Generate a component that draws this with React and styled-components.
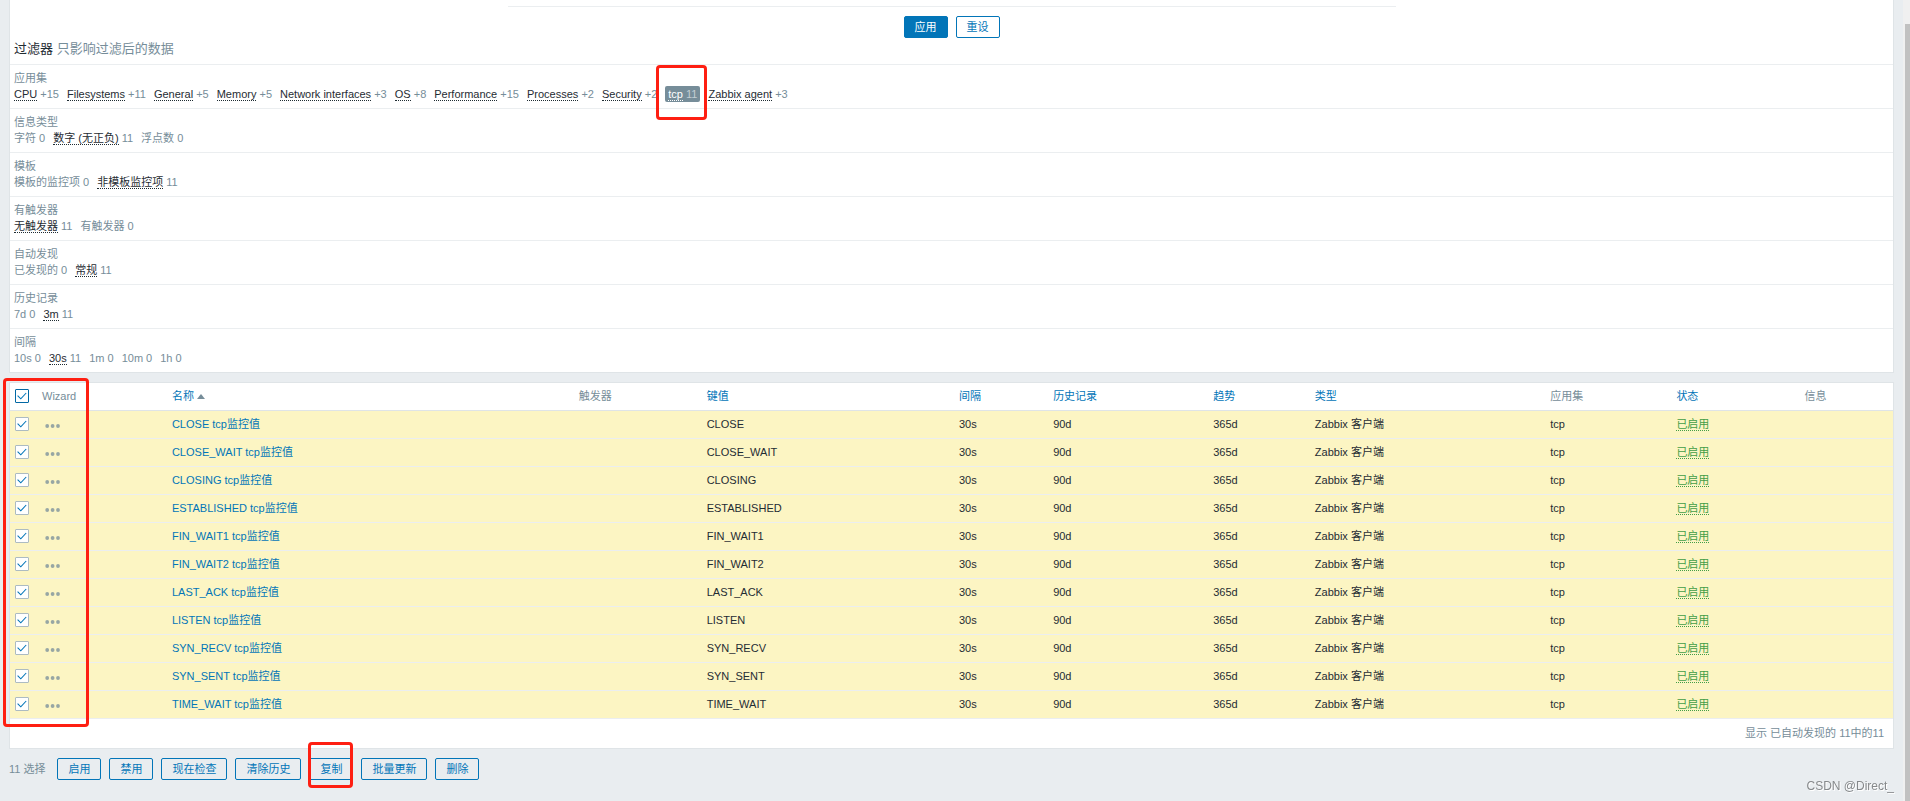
import { useState } from 'react';
import styled, { createGlobalStyle, css } from 'styled-components';

const subfilters = [
  {
    title: '应用集',
    items: [
      { name: 'CPU', count: '+15' },
      { name: 'Filesystems', count: '+11' },
      { name: 'General', count: '+5' },
      { name: 'Memory', count: '+5' },
      { name: 'Network interfaces', count: '+3' },
      { name: 'OS', count: '+8' },
      { name: 'Performance', count: '+15' },
      { name: 'Processes', count: '+2' },
      { name: 'Security', count: '+2' },
      { name: 'tcp', count: '11', active: true },
      { name: 'Zabbix agent', count: '+3' },
    ],
  },
  {
    title: '信息类型',
    items: [
      { name: '字符', count: '0' },
      { name: '数字 (无正负)', count: '11' },
      { name: '浮点数', count: '0' },
    ],
  },
  {
    title: '模板',
    items: [
      { name: '模板的监控项', count: '0' },
      { name: '非模板监控项', count: '11' },
    ],
  },
  {
    title: '有触发器',
    items: [
      { name: '无触发器', count: '11' },
      { name: '有触发器', count: '0' },
    ],
  },
  {
    title: '自动发现',
    items: [
      { name: '已发现的', count: '0' },
      { name: '常规', count: '11' },
    ],
  },
  {
    title: '历史记录',
    items: [
      { name: '7d', count: '0' },
      { name: '3m', count: '11' },
    ],
  },
  {
    title: '间隔',
    items: [
      { name: '10s', count: '0' },
      { name: '30s', count: '11' },
      { name: '1m', count: '0' },
      { name: '10m', count: '0' },
      { name: '1h', count: '0' },
    ],
  },
];

const columns = [
  { label: 'Wizard', width: '6.9%' },
  { label: '名称', width: '21.6%', sortable: true, sorted: true },
  { label: '触发器', width: '6.8%' },
  { label: '键值', width: '13.4%', sortable: true },
  { label: '间隔', width: '5%', sortable: true },
  { label: '历史记录', width: '8.5%', sortable: true },
  { label: '趋势', width: '5.4%', sortable: true },
  { label: '类型', width: '12.5%', sortable: true },
  { label: '应用集', width: '6.7%' },
  { label: '状态', width: '6.8%', sortable: true },
  { label: '信息' },
];

const keys = [
  'CLOSE',
  'CLOSE_WAIT',
  'CLOSING',
  'ESTABLISHED',
  'FIN_WAIT1',
  'FIN_WAIT2',
  'LAST_ACK',
  'LISTEN',
  'SYN_RECV',
  'SYN_SENT',
  'TIME_WAIT',
];

const actions = ['启用', '禁用', '现在检查', '清除历史', '复制', '批量更新', '删除'];

function Checkbox({ label, checked, onChange, strong }) {
  return (
    <CheckLabel>
      <CheckInput
        type="checkbox"
        aria-label={label}
        checked={checked}
        onChange={onChange}
        $strong={strong}
      />
      {checked && (
        <CheckMark viewBox="0 0 14 14" aria-hidden="true">
          <path d="M2.6 6.6 L5.8 9.8 L11.2 4" />
        </CheckMark>
      )}
    </CheckLabel>
  );
}

function SubfilterItem({ name, count, active }) {
  const link = (
    <>
      {count === '0' ? name : <SubfilterLink href="#">{name}</SubfilterLink>} <span>{count}</span>
    </>
  );

  if (active) {
    return (
      <ActiveItem>
        {link}
        <TagMark />
      </ActiveItem>
    );
  }
  return <Item>{link}</Item>;
}

function App() {
  const [selected, setSelected] = useState(keys);

  const toggle = (key) => {
    setSelected((current) =>
      current.includes(key) ? current.filter((k) => k !== key) : [...current, key]
    );
  };

  const toggleAll = () => {
    setSelected((current) => (current.length === keys.length ? [] : keys));
  };

  return (
    <>
      <GlobalStyle />
      <Page>
        <Main>
          <FilterPanel>
            <FilterForm />
            <FilterButtons>
              <Button type="button" $primary>
                应用
              </Button>
              <Button type="button">重设</Button>
            </FilterButtons>
            <FilterTitle>
              过滤器 <span>只影响过滤后的数据</span>
            </FilterTitle>
            {subfilters.map((group) => (
              <Subfilter key={group.title}>
                <SubfilterTitle>{group.title}</SubfilterTitle>
                <SubfilterItems>
                  {group.items.map((item) => (
                    <SubfilterItem key={item.name} {...item} />
                  ))}
                </SubfilterItems>
              </Subfilter>
            ))}
          </FilterPanel>

          <TablePanel>
            <Table>
              <colgroup>
                <Col $width="27px" />
                {columns.map((col) => (
                  <Col key={col.label} $width={col.width} />
                ))}
              </colgroup>
              <thead>
                <tr>
                  <Th>
                    <Checkbox
                      label="全选"
                      strong
                      checked={selected.length === keys.length}
                      onChange={toggleAll}
                    />
                  </Th>
                  {columns.map((col) => (
                    <Th key={col.label}>
                      {col.sortable ? <Link href="#">{col.label}</Link> : col.label}
                      {col.sorted && <SortArrow />}
                    </Th>
                  ))}
                </tr>
              </thead>
              <tbody>
                {keys.map((key) => (
                  <Row key={key} $selected={selected.includes(key)}>
                    <Td>
                      <Checkbox
                        label={key}
                        checked={selected.includes(key)}
                        onChange={() => toggle(key)}
                      />
                    </Td>
                    <Td>
                      <WizardButton type="button" aria-label="Wizard">
                        <svg width="16" height="4" viewBox="0 0 16 4">
                          <circle cx="2.2" cy="2" r="1.9" />
                          <circle cx="7.6" cy="2" r="1.9" />
                          <circle cx="13" cy="2" r="1.9" />
                        </svg>
                      </WizardButton>
                    </Td>
                    <Td>
                      <Link href="#">{key} tcp监控值</Link>
                    </Td>
                    <Td />
                    <Td>{key}</Td>
                    <Td>30s</Td>
                    <Td>90d</Td>
                    <Td>365d</Td>
                    <Td>Zabbix 客户端</Td>
                    <Td>tcp</Td>
                    <Td>
                      <StatusLink href="#">已启用</StatusLink>
                    </Td>
                    <Td />
                  </Row>
                ))}
              </tbody>
            </Table>
            <TableTotal>显示 已自动发现的 11中的11</TableTotal>
            <ColumnMark />
          </TablePanel>

          <ActionBar>
            <SelectedCount>{selected.length} 选择</SelectedCount>
            {actions.map((action) => (
              <Button key={action} type="button">
                {action}
                {action === '复制' && <ButtonMark />}
              </Button>
            ))}
          </ActionBar>
        </Main>
        <ScrollTrack>
          <ScrollThumb />
        </ScrollTrack>
        <Watermark>CSDN @Direct_</Watermark>
      </Page>
    </>
  );
}

export default App;

const GlobalStyle = createGlobalStyle`
  * {
    box-sizing: border-box;
  }

  body {
    margin: 0;
    background-color: #e9edf0;
    color: #1f2c33;
    font-family: "Liberation Sans", "Noto Sans CJK SC", sans-serif;
    font-size: 11px;
    line-height: 16px;
  }
`;

const Page = styled.div`
  display: flex;
  min-height: 100vh;
`;

const Main = styled.main`
  flex: 1;
  min-width: 0;
  padding: 0 9px;
`;

const FilterPanel = styled.section`
  background-color: #fff;
  border: 1px solid #dfe4e7;
  border-top: none;
`;

const FilterForm = styled.div`
  max-width: 888px;
  height: 7px;
  margin: 0 auto;
  border-bottom: 1px solid #ebeef0;
`;

const FilterButtons = styled.div`
  display: flex;
  justify-content: center;
  gap: 8px;
  padding-top: 9px;
`;

const Button = styled.button`
  position: relative;
  height: 22px;
  padding: 0 10px;
  border: 1px solid #0275b8;
  border-radius: 2px;
  background-color: transparent;
  color: #0275b8;
  font-family: inherit;
  font-size: 11px;
  line-height: 20px;
  cursor: pointer;
  ${({ $primary }) =>
    $primary &&
    css`
      background-color: #0275b8;
      color: #fff;
    `}
`;

const FilterTitle = styled.h4`
  margin: 0;
  padding: 0 4px 4px;
  font-size: 13px;
  font-weight: normal;
  line-height: 22px;

  span {
    color: #768d99;
  }
`;

const Subfilter = styled.div`
  padding: 5px 4px 6px;
  border-top: 1px solid #ebeef0;
  color: #768d99;
`;

const SubfilterTitle = styled.h3`
  margin: 0;
  font-size: 11px;
  font-weight: normal;
  line-height: 16px;
`;

const SubfilterItems = styled.div`
  display: flex;
  flex-wrap: wrap;
  gap: 0 8px;
`;

const Item = styled.span`
  white-space: nowrap;
`;

const SubfilterLink = styled.a`
  border-bottom: 1px dotted #1f2c33;
  color: #1f2c33;
  text-decoration: none;
`;

const ActiveItem = styled(Item)`
  position: relative;
  padding: 0 3px;
  border-radius: 2px;
  background-color: #768d99;
  color: #c3ced3;

  ${SubfilterLink} {
    border-color: #fff;
    color: #fff;
  }
`;

const TablePanel = styled.section`
  position: relative;
  margin-top: 9px;
  border: 1px solid #dfe4e7;
  background-color: #fff;
`;

const Table = styled.table`
  width: 100%;
  border-spacing: 0;
  table-layout: fixed;
`;

const Col = styled.col`
  width: ${({ $width }) => $width || 'auto'};
`;

const Th = styled.th`
  height: 28px;
  padding: 0 5px 1px;
  border-bottom: 1px solid #dfe4e7;
  color: #768d99;
  font-weight: normal;
  text-align: left;
  white-space: nowrap;
`;

const Td = styled.td`
  height: 28px;
  padding: 0 5px 1px;
  border-bottom: 1px solid #ebeef0;
  white-space: nowrap;
`;

const Row = styled.tr`
  background-color: ${({ $selected }) => ($selected ? '#fcf5c3' : '#fff')};
`;

const Link = styled.a`
  color: #0275b8;
  text-decoration: none;
  &:hover {
    text-decoration: underline;
  }
`;

const StatusLink = styled.a`
  border-bottom: 1px dotted #429e47;
  color: #429e47;
  text-decoration: none;
`;

const SortArrow = styled.span`
  display: inline-block;
  margin-left: 3px;
  border: 4px solid transparent;
  border-top: none;
  border-bottom: 5px solid #768d99;
  vertical-align: 1px;
`;

const CheckLabel = styled.label`
  display: grid;
  width: 14px;
  height: 14px;
`;

const CheckInput = styled.input`
  grid-area: 1 / 1;
  width: 14px;
  height: 14px;
  margin: 0;
  border: 1px solid ${({ $strong }) => ($strong ? '#0268a4' : '#acbbc2')};
  border-radius: 1px;
  background-color: #fff;
  appearance: none;
`;

const CheckMark = styled.svg`
  grid-area: 1 / 1;
  width: 14px;
  height: 14px;
  fill: none;
  stroke: #0275b8;
  stroke-width: 1.1;
  pointer-events: none;
`;

const WizardButton = styled.button`
  display: block;
  padding: 3px 3px 0;
  border: none;
  background: none;
  fill: #97a6a4;
  line-height: 0;
  cursor: pointer;
`;

const TableTotal = styled.div`
  padding: 6px 9px 7px;
  color: #768d99;
  text-align: right;
`;

const ActionBar = styled.div`
  display: flex;
  align-items: center;
  gap: 8px;
  padding: 9px 0;
`;

const SelectedCount = styled.span`
  margin-right: 4px;
  color: #768d99;
`;

const Mark = styled.span`
  position: absolute;
  border: 3px solid #fe1f12;
  border-radius: 4px;
  pointer-events: none;
`;

const TagMark = styled(Mark)`
  inset: -21px -7px -18px -9px;
`;

const ColumnMark = styled(Mark)`
  top: -5px;
  bottom: 21px;
  left: -7px;
  width: 86px;
`;

const ButtonMark = styled(Mark)`
  inset: -17px -1px -9px -2px;
`;

const ScrollTrack = styled.div`
  width: 7px;
  padding: 24px 0 0 2px;
  background-color: #f0f0f0;
`;

const ScrollThumb = styled.div`
  height: 100%;
  background-color: #c1c1c1;
`;

const Watermark = styled.div`
  position: fixed;
  right: 16px;
  bottom: 7px;
  color: #86898b;
  font-family: "Liberation Sans", sans-serif;
  font-size: 12px;
  text-shadow: 1px 1px 0 #fff;
`;
